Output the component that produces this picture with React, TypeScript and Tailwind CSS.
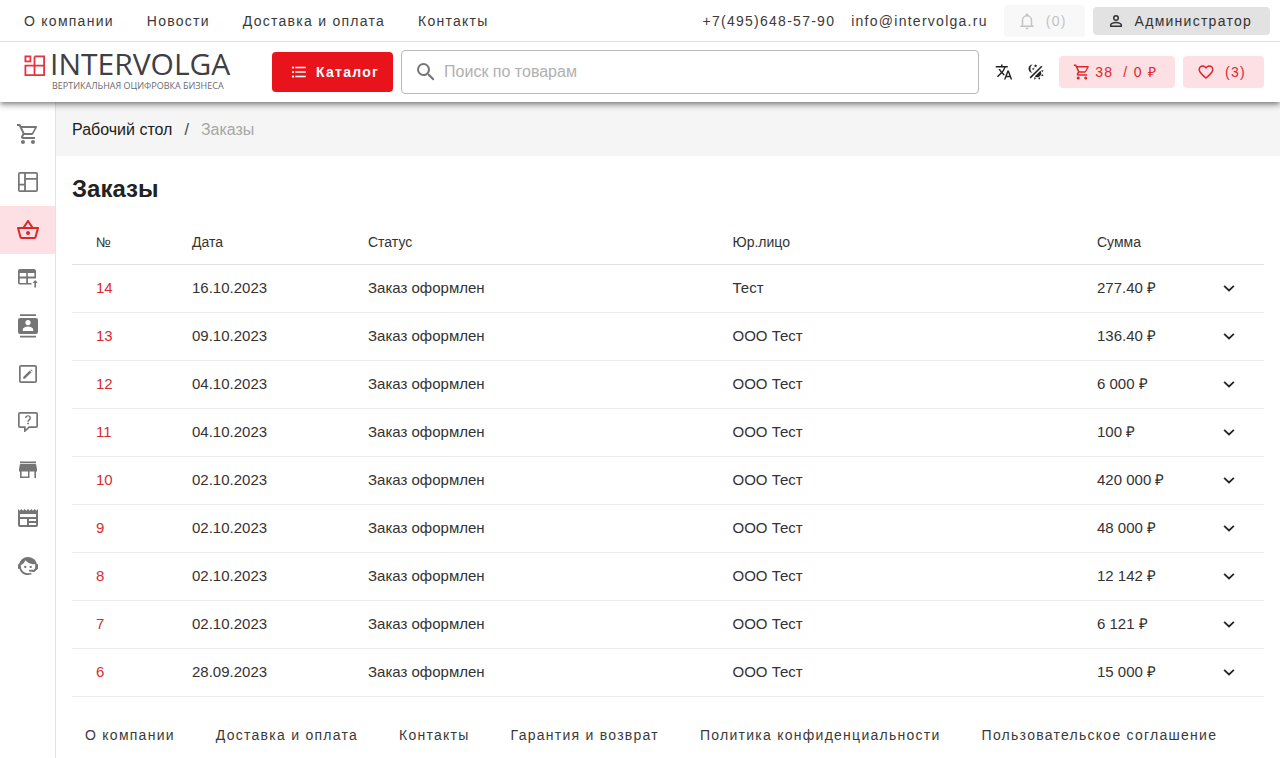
import type { ReactNode } from 'react'

// ─── Icons (24px grid) ───────────────────────────────────────────────────────

const ICONS = {
  cart: 'M17,18A2,2 0 0,1 19,20A2,2 0 0,1 17,22C15.89,22 15,21.1 15,20C15,18.89 15.89,18 17,18M1,2H4.27L5.21,4H20A1,1 0 0,1 21,5C21,5.17 20.95,5.34 20.88,5.5L17.3,11.97C16.96,12.58 16.3,13 15.55,13H8.1L7.2,14.63L7.17,14.75A0.25,0.25 0 0,0 7.42,15H19V17H7C5.89,17 5,16.1 5,15C5,14.65 5.09,14.32 5.24,14.04L6.6,11.59L3,4H1V2M7,18A2,2 0 0,1 9,20A2,2 0 0,1 7,22C5.89,22 5,21.1 5,20C5,18.89 5.89,18 7,18M16,11L18.78,6H6.14L8.5,11H16Z',
  dashboard: 'M4,2H20A2,2 0 0,1 22,4V20A2,2 0 0,1 20,22H4A2,2 0 0,1 2,20V4A2,2 0 0,1 4,2M3.7,3.7V13.7H8.1V3.7H3.7M9.9,3.7V7.9H20.3V3.7H9.9M9.9,9.7V20.3H20.3V9.7H9.9M3.7,15.5V20.3H8.1V15.5H3.7Z',
  basket: 'M22 9h-4.79l-4.38-6.56c-.19-.28-.51-.42-.83-.42s-.64.14-.83.43L6.79 9H2c-.55 0-1 .45-1 1 0 .09.01.18.04.27l2.54 9.27c.23.84 1 1.46 1.92 1.46h13c.92 0 1.69-.62 1.93-1.46l2.54-9.27L23 10c0-.55-.45-1-1-1zM12 4.8L14.8 9H9.2L12 4.8zM18.5 19l-12.99.01L3.31 11H20.7l-2.2 8zM12 13c-1.1 0-2 .9-2 2s.9 2 2 2 2-.9 2-2-.9-2-2-2z',
  tableUp: 'M4,3H18A2,2 0 0,1 20,5V12.5H12V17H15.5V18.6H4A2,2 0 0,1 2,17V5A2,2 0 0,1 4,3M3.7,7V10.6H10.2V7H3.7M11.8,7V10.6H18.4V7H11.8M3.7,12.4V17H10.2V12.4H3.7M18.4,21.5V16.9H16.6L19.2,14L21.8,16.9H20V21.5H18.4Z',
  contacts: 'M20,0.3H4V2H20V0.3M4,23.4H20V21.7H4V23.4M20,4H4A2,2 0 0,0 2,6V18A2,2 0 0,0 4,20H20A2,2 0 0,0 22,18V6A2,2 0 0,0 20,4M12,6A2.6,2.6 0 0,1 14.6,8.6A2.6,2.6 0 0,1 12,11.2A2.6,2.6 0 0,1 9.4,8.6A2.6,2.6 0 0,1 12,6M17.2,17H6.8V15.5C6.8,13.4 10.33,12.4 12,12.4C13.67,12.4 17.2,13.4 17.2,15.5V17Z',
  edit: 'M19.3,19.3V4.7H4.7V19.3H19.3M19,3A2,2 0 0,1 21,5V19A2,2 0 0,1 19,21H5A2,2 0 0,1 3,19V5C3,3.89 3.9,3 5,3H19M13.8,8.5L15.5,10.2L8.9,16.8H7.2V15.1L13.8,8.5M14.4,7.9L15,7.3L16.7,9L16.1,9.6L14.4,7.9Z',
  question: 'M4,2H20A2,2 0 0,1 22,4V16A2,2 0 0,1 20,18H13.4L9,22H8V18H4A2,2 0 0,1 2,16V4A2,2 0 0,1 4,2M3.7,3.7V16.3H9.7V19.2L12.8,16.3H20.3V3.7H3.7M12,5.2C10.3,5.2 9.1,6.3 9,7.9H10.5C10.6,7.1 11.2,6.6 12,6.6C12.9,6.6 13.5,7.1 13.5,7.9C13.5,9.2 11.3,9.3 11.3,11.8H12.8C12.8,10.2 15,9.9 15,7.9C15,6.3 13.7,5.2 12,5.2M11.2,12.8V14.3H12.9V12.8H11.2Z',
  store: 'M20,3.5H4V5.2H20V3.5M21,13.5V11L20,6H4L3,11V13.5H4V20H13.5V13.5H18.4V20H20V13.5H21M12,18.4H5.6V13.5H12V18.4Z',
  news: 'M20,11H4V8H20M20,15H13V13H20M20,19H13V17H20M11,19H4V13H11M20.33,4.67L18.67,3L17,4.67L15.33,3L13.67,4.67L12,3L10.33,4.67L8.67,3L7,4.67L5.33,3L3.67,4.67L2,3V19A2,2 0 0,0 4,21H20A2,2 0 0,0 22,19V3L20.33,4.67Z',
  agent: 'M18.72,14.76C19.07,13.91 19.26,13 19.26,12C19.26,11.28 19.15,10.59 18.96,9.95C18.31,10.1 17.63,10.18 16.92,10.18C13.86,10.18 11.15,8.67 9.5,6.34C8.61,8.5 6.91,10.26 4.77,11.22C4.73,11.47 4.73,11.74 4.73,12A7.27,7.27 0 0,0 12,19.27C13.05,19.27 14.06,19.04 14.97,18.63C15.54,19.72 15.8,20.26 15.78,20.26C14.14,20.81 12.87,21.08 12,21.08C9.58,21.08 7.27,20.13 5.57,18.42C4.53,17.38 3.76,16.11 3.33,14.73H2V10.18H3.09C3.93,6.04 7.6,2.92 12,2.92C14.4,2.92 16.71,3.87 18.42,5.58C19.69,6.84 20.54,8.45 20.89,10.18H22V14.67H22V14.69L22,14.73H21.94L18.38,18L13.08,17.4V15.73H17.91L18.72,14.76M9.27,11.77C9.57,11.77 9.86,11.89 10.07,12.11C10.28,12.32 10.4,12.61 10.4,12.91C10.4,13.21 10.28,13.5 10.07,13.71C9.86,13.92 9.57,14.04 9.27,14.04C8.64,14.04 8.13,13.54 8.13,12.91C8.13,12.28 8.64,11.77 9.27,11.77M14.72,11.77C15.35,11.77 15.85,12.28 15.85,12.91C15.85,13.54 15.35,14.04 14.72,14.04C14.09,14.04 13.58,13.54 13.58,12.91A1.14,1.14 0 0,1 14.72,11.77Z',
  bell: 'M10,21H14A2,2 0 0,1 12,23A2,2 0 0,1 10,21M21,19V20H3V19L5,17V11C5,7.9 7.03,5.17 10,4.29C10,4.19 10,4.1 10,4A2,2 0 0,1 12,2A2,2 0 0,1 14,4C14,4.1 14,4.19 14,4.29C16.97,5.17 19,7.9 19,11V17L21,19M17,11A5,5 0 0,0 12,6A5,5 0 0,0 7,11V18H17V11Z',
  account: 'M12,4A4,4 0 0,1 16,8A4,4 0 0,1 12,12A4,4 0 0,1 8,8A4,4 0 0,1 12,4M12,6A2,2 0 0,0 10,8A2,2 0 0,0 12,10A2,2 0 0,0 14,8A2,2 0 0,0 12,6M12,13C14.67,13 20,14.33 20,17V20H4V17C4,14.33 9.33,13 12,13M12,14.9C9.03,14.9 5.9,16.36 5.9,17V18.1H18.1V17C18.1,16.36 14.97,14.9 12,14.9Z',
  list: 'M7,5H21V7H7V5M7,13V11H21V13H7M4,4.5A1.5,1.5 0 0,1 5.5,6A1.5,1.5 0 0,1 4,7.5A1.5,1.5 0 0,1 2.5,6A1.5,1.5 0 0,1 4,4.5M4,10.5A1.5,1.5 0 0,1 5.5,12A1.5,1.5 0 0,1 4,13.5A1.5,1.5 0 0,1 2.5,12A1.5,1.5 0 0,1 4,10.5M7,19V17H21V19H7M4,16.5A1.5,1.5 0 0,1 5.5,18A1.5,1.5 0 0,1 4,19.5A1.5,1.5 0 0,1 2.5,18A1.5,1.5 0 0,1 4,16.5Z',
  search: 'M9.5,3A6.5,6.5 0 0,1 16,9.5C16,11.11 15.41,12.59 14.44,13.73L14.71,14H15.5L20.5,19L19,20.5L14,15.5V14.71L13.73,14.44C12.59,15.41 11.11,16 9.5,16A6.5,6.5 0 0,1 3,9.5A6.5,6.5 0 0,1 9.5,3M9.5,5C7,5 5,7 5,9.5C5,12 7,14 9.5,14C12,14 14,12 14,9.5C14,7 12,5 9.5,5Z',
  translate: 'M12.87,15.07L10.33,12.56L10.36,12.53C12.1,10.59 13.34,8.36 14.07,6H17V4H10V2H8V4H1V6H12.17C11.5,7.92 10.44,9.75 9,11.35C8.07,10.32 7.3,9.19 6.69,8H4.69C5.42,9.63 6.42,11.17 7.67,12.56L2.58,17.58L4,19L9,14L12.11,17.11L12.87,15.07M18.5,10H16.5L12,22H14L15.12,19H19.87L21,22H23L18.5,10M15.88,17L17.5,12.67L19.12,17H15.88Z',
  theme: 'M7.5,2C5.71,3.15 4.5,5.18 4.5,7.5C4.5,9.82 5.71,11.85 7.53,13C4.46,13 2,10.54 2,7.5A5.5,5.5 0 0,1 7.5,2M19.07,3.5L20.5,4.93L4.93,20.5L3.5,19.07L19.07,3.5M12.89,5.93L11.41,5L9.97,6L10.39,4.3L9,3.24L10.75,3.12L11.33,1.47L12,3.1L13.73,3.13L12.38,4.26L12.89,5.93M9.59,9.54L8.43,8.81L7.31,9.59L7.65,8.27L6.56,7.44L7.92,7.35L8.37,6.06L8.88,7.33L10.24,7.36L9.19,8.23L9.59,9.54M19,13.5A5.5,5.5 0 0,1 13.5,19C12.28,19 11.15,18.6 10.24,17.93L17.93,10.24C18.6,11.15 19,12.28 19,13.5M14.6,20.08L17.37,18.93L17.13,22.28L14.6,20.08M18.93,17.38L20.08,14.61L22.28,17.15L18.93,17.38M20.08,12.42L18.94,9.64L22.28,9.88L20.08,12.42M9.63,18.93L12.4,20.08L9.87,22.27L9.63,18.93Z',
  heart: 'M12.1,18.55L12,18.65L11.89,18.55C7.14,14.24 4,11.39 4,8.5C4,6.5 5.5,5 7.5,5C9.04,5 10.54,6 11.07,7.36H12.93C13.46,6 14.96,5 16.5,5C18.5,5 20,6.5 20,8.5C20,11.39 16.86,14.24 12.1,18.55M16.5,3C14.76,3 13.09,3.81 12,5.08C10.91,3.81 9.24,3 7.5,3C4.42,3 2,5.41 2,8.5C2,12.27 5.4,15.36 10.55,20.03L12,21.35L13.45,20.03C18.6,15.36 22,12.27 22,8.5C22,5.41 19.58,3 16.5,3Z',
  chevron: 'M6.9,8.6L12,13.6L17.1,8.6L18.6,10.1L12,16.6L5.4,10.1L6.9,8.6Z',
}

type IconName = keyof typeof ICONS

function Icon({ name, className }: { name: IconName; className: string }) {
  return (
    <svg viewBox="0 0 24 24" fill="currentColor" fillRule="evenodd" aria-hidden="true" className={`shrink-0 ${className}`}>
      <path d={ICONS[name]} />
    </svg>
  )
}

// ─── Data ────────────────────────────────────────────────────────────────────

const TOP_LINKS = ['О компании', 'Новости', 'Доставка и оплата', 'Контакты']

const FOOTER_LINKS = [
  'О компании',
  'Доставка и оплата',
  'Контакты',
  'Гарантия и возврат',
  'Политика конфиденциальности',
  'Пользовательское соглашение',
]

const SIDE_ITEMS: { icon: IconName; label: string; active?: boolean }[] = [
  { icon: 'cart',      label: 'Корзина' },
  { icon: 'dashboard', label: 'Рабочий стол' },
  { icon: 'basket',    label: 'Заказы', active: true },
  { icon: 'tableUp',   label: 'Загрузка' },
  { icon: 'contacts',  label: 'Контакты' },
  { icon: 'edit',      label: 'Редактирование' },
  { icon: 'question',  label: 'Вопросы' },
  { icon: 'store',     label: 'Магазин' },
  { icon: 'news',      label: 'Новости' },
  { icon: 'agent',     label: 'Поддержка' },
]

const ORDERS = [
  { id: 14, date: '16.10.2023', company: 'Тест',     sum: '277.40 ₽' },
  { id: 13, date: '09.10.2023', company: 'ООО Тест', sum: '136.40 ₽' },
  { id: 12, date: '04.10.2023', company: 'ООО Тест', sum: '6 000 ₽' },
  { id: 11, date: '04.10.2023', company: 'ООО Тест', sum: '100 ₽' },
  { id: 10, date: '02.10.2023', company: 'ООО Тест', sum: '420 000 ₽' },
  { id: 9,  date: '02.10.2023', company: 'ООО Тест', sum: '48 000 ₽' },
  { id: 8,  date: '02.10.2023', company: 'ООО Тест', sum: '12 142 ₽' },
  { id: 7,  date: '02.10.2023', company: 'ООО Тест', sum: '6 121 ₽' },
  { id: 6,  date: '28.09.2023', company: 'ООО Тест', sum: '15 000 ₽' },
]

// ─── Header ──────────────────────────────────────────────────────────────────

function TextLink({ children }: { children: ReactNode }) {
  return (
    <a href="#" className="whitespace-nowrap text-sm tracking-[0.09em] text-[#3a3a3a]">
      {children}
    </a>
  )
}

function Logo() {
  return (
    <a href="#" className="flex w-[208px] shrink-0 items-start gap-1 pb-1.5 font-['Open_Sans',sans-serif] whitespace-nowrap">
      <svg viewBox="0 0 22 22" fill="none" stroke="#e8323f" strokeWidth="1.8" aria-hidden="true" className="mt-1.5 size-[22px] shrink-0">
        <rect x="1.4" y="1.4" width="5" height="5" />
        <path d="M10.5 1.4H20.1V20.1H1.4V10.6H20.1M10.5 1.4V20.1" />
      </svg>
      <span className="flex flex-col gap-0.5">
        <span className="text-3xl leading-none text-[#3f4045]">INTERVOLGA</span>
        <span className="pl-0.5 text-[9px] leading-none text-[#6a6a6e]">ВЕРТИКАЛЬНАЯ ОЦИФРОВКА БИЗНЕСА</span>
      </span>
    </a>
  )
}

function Header() {
  return (
    <header className="relative z-10 bg-white shadow-[0_2px_4px_-1px_rgba(0,0,0,0.3),0_4px_5px_rgba(0,0,0,0.2),0_1px_10px_rgba(0,0,0,0.12)]">
      <div className="flex h-[42px] items-center justify-between border-b border-[#e2e2e2] pr-2.5 pl-6">
        <nav className="flex gap-[33px]">
          {TOP_LINKS.map(label => <TextLink key={label}>{label}</TextLink>)}
        </nav>
        <div className="flex items-center">
          <div className="mr-4 flex gap-4">
            <TextLink>+7(495)648-57-90</TextLink>
            <TextLink>info@intervolga.ru</TextLink>
          </div>
          <button
            type="button"
            disabled
            className="mr-2 flex h-8 items-center gap-2.5 rounded bg-[#f8f8f8] pr-[18px] pl-3.5 text-sm tracking-[0.09em] text-[#c4c4c4]"
          >
            <Icon name="bell" className="size-[18px]" />
            (0)
          </button>
          <button
            type="button"
            className="flex h-7 items-center gap-2.5 rounded bg-[#e2e2e2] pr-[18px] pl-3.5 text-sm tracking-[0.09em] text-[#333]"
          >
            <Icon name="account" className="size-[18px]" />
            Администратор
          </button>
        </div>
      </div>

      <div className="flex h-[60px] items-center pr-4 pl-6">
        <Logo />
        <button
          type="button"
          className="ml-10 flex h-10 shrink-0 items-center gap-2 rounded bg-[#e8131b] pr-3.5 pl-[18px] text-sm font-bold tracking-[0.09em] text-white"
        >
          <Icon name="list" className="size-[18px]" />
          Каталог
        </button>
        <label className="ml-2 flex h-11 min-w-0 flex-1 items-center gap-1.5 rounded border border-[#b8b8b8] px-3">
          <Icon name="search" className="size-6 text-[#757575]" />
          <input
            type="text"
            aria-label="Поиск по товарам"
            placeholder="Поиск по товарам"
            className="min-w-0 flex-1 text-base outline-none placeholder:text-[#b0b0b0]"
          />
        </label>
        <button type="button" aria-label="Язык" className="ml-4 text-[#222]">
          <Icon name="translate" className="size-[18px]" />
        </button>
        <button type="button" aria-label="Тема" className="ml-3.5 text-[#222]">
          <Icon name="theme" className="size-[18px]" />
        </button>
        <button
          type="button"
          className="ml-3.5 flex h-8 items-center gap-1 rounded bg-[#fce0e3] pr-[18px] pl-3.5 text-sm tracking-[0.09em] text-[#e0242c]"
        >
          <Icon name="cart" className="size-[18px]" />
          <span>38</span>
          <span className="ml-1.5">/ 0 ₽</span>
        </button>
        <button
          type="button"
          className="ml-2 flex h-8 items-center gap-2.5 rounded bg-[#fce0e3] pr-[18px] pl-3.5 text-sm tracking-[0.09em] text-[#e0242c]"
        >
          <Icon name="heart" className="size-[18px]" />
          (3)
        </button>
      </div>
    </header>
  )
}

// ─── Sidebar ─────────────────────────────────────────────────────────────────

function Sidebar() {
  return (
    <nav className="w-14 shrink-0 border-r border-[#e2e2e2] pt-2">
      {SIDE_ITEMS.map(item => (
        <a
          key={item.icon}
          href="#"
          aria-label={item.label}
          className={`flex h-12 items-center justify-center ${item.active ? 'bg-[#fce0e3] text-[#e0242c]' : 'text-[#757575]'}`}
        >
          <Icon name={item.icon} className="size-6" />
        </a>
      ))}
    </nav>
  )
}

// ─── Orders ──────────────────────────────────────────────────────────────────

function OrdersTable() {
  return (
    <table className="w-full table-fixed text-left text-[#333]">
      <colgroup>
        <col className="w-24" />
        <col className="w-44" />
        <col />
        <col />
        <col className="w-[121px]" />
        <col className="w-[70px]" />
      </colgroup>
      <thead>
        <tr className="h-11 border-b border-[#e2e2e2] text-sm">
          <th className="pl-6 font-normal">№</th>
          <th className="pl-6 font-normal">Дата</th>
          <th className="pl-6 font-normal">Статус</th>
          <th className="pl-6 font-normal">Юр.лицо</th>
          <th className="pl-6 font-normal">Сумма</th>
          <th />
        </tr>
      </thead>
      <tbody className="text-[15px]">
        {ORDERS.map(order => (
          <tr key={order.id} className="h-12 border-b border-[#ececec]">
            <td className="pl-6"><a href="#" className="text-[#d92b33]">{order.id}</a></td>
            <td className="pl-6">{order.date}</td>
            <td className="pl-6">Заказ оформлен</td>
            <td className="pl-6">{order.company}</td>
            <td className="pl-6 whitespace-nowrap">{order.sum}</td>
            <td>
              <button type="button" aria-label={`Заказ ${order.id}`} className="mx-auto flex text-[#222]">
                <Icon name="chevron" className="size-5" />
              </button>
            </td>
          </tr>
        ))}
      </tbody>
    </table>
  )
}

export default function App() {
  return (
    <div className="flex min-h-screen flex-col bg-white font-['Liberation_Sans',Arial,sans-serif]">
      <Header />
      <div className="flex flex-1">
        <Sidebar />
        <div className="min-w-0 flex-1">
          <nav className="flex h-[54px] items-center gap-3 bg-[#f5f5f5] px-4 pt-0.5">
            <a href="#" className="text-[#1c1c1c]">Рабочий стол</a>
            <span className="text-[#444]">/</span>
            <span className="text-[#a6a6a6]">Заказы</span>
          </nav>
          <main className="px-4">
            <h1 className="pt-[17px] pb-[15px] text-2xl font-bold text-[#222]">Заказы</h1>
            <OrdersTable />
          </main>
          <footer className="flex flex-wrap gap-x-[41px] gap-y-2 px-[29px] py-7">
            {FOOTER_LINKS.map(label => <TextLink key={label}>{label}</TextLink>)}
          </footer>
        </div>
      </div>
    </div>
  )
}
